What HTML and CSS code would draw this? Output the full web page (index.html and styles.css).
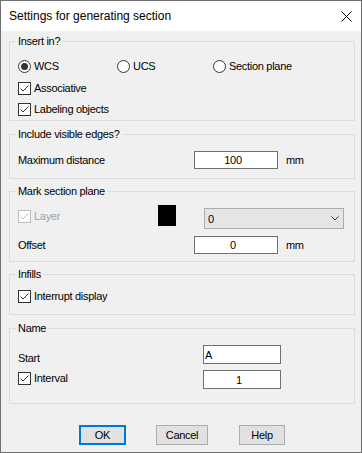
FILE: index.html
```html
<!DOCTYPE html>
<html lang="en">
<head>
  <meta charset="UTF-8" />
  <title>Settings for generating section</title>
  <link rel="stylesheet" href="styles.css">
</head>
<body>
  <div class="dialog">
    <div class="titlebar">
      <span class="title">Settings for generating section</span>
      <svg class="close" width="11" height="11" viewBox="0 0 11 11">
        <path d="M0.5 0.5 L10.5 10.5 M10.5 0.5 L0.5 10.5" stroke="#000" stroke-width="1" fill="none"/>
      </svg>
    </div>

    <div class="content">
      <fieldset class="group g-insert">
        <legend>Insert in?</legend>
        <div class="radio-row">
          <label class="option"><span class="radio on"></span>WCS</label>
          <label class="option"><span class="radio"></span>UCS</label>
          <label class="option"><span class="radio"></span>Section plane</label>
        </div>
        <div class="check-row">
          <label class="option">
            <span class="checkbox"><svg width="11" height="11" viewBox="0 0 11 11"><path d="M1.5 5.5 L4 8 L9.5 2.5" stroke="#333" fill="none"/></svg></span>Associative
          </label>
        </div>
        <div class="check-row">
          <label class="option">
            <span class="checkbox"><svg width="11" height="11" viewBox="0 0 11 11"><path d="M1.5 5.5 L4 8 L9.5 2.5" stroke="#333" fill="none"/></svg></span>Labeling objects
          </label>
        </div>
      </fieldset>

      <fieldset class="group g-edges">
        <legend>Include visible edges?</legend>
        <div class="field-row">
          <span>Maximum distance</span>
          <input class="edit" type="text" value="100">
          <span class="unit">mm</span>
        </div>
      </fieldset>

      <fieldset class="group g-mark">
        <legend>Mark section plane</legend>
        <div class="layer-row">
          <label class="option layer disabled">
            <span class="checkbox"><svg width="11" height="11" viewBox="0 0 11 11"><path d="M1.5 5.5 L4 8 L9.5 2.5" stroke="#bcbcbc" fill="none"/></svg></span>Layer
          </label>
          <span class="swatch"></span>
          <div class="combo">
            <span>0</span>
            <svg width="8" height="5" viewBox="0 0 8 5"><path d="M0.5 0.5 L4 4 L7.5 0.5" stroke="#333" fill="none"/></svg>
          </div>
        </div>
        <div class="field-row offset-row">
          <span>Offset</span>
          <input class="edit" type="text" value="0">
          <span class="unit">mm</span>
        </div>
      </fieldset>

      <fieldset class="group g-infills">
        <legend>Infills</legend>
        <div class="single-row">
          <label class="option">
            <span class="checkbox"><svg width="11" height="11" viewBox="0 0 11 11"><path d="M1.5 5.5 L4 8 L9.5 2.5" stroke="#333" fill="none"/></svg></span>Interrupt display
          </label>
        </div>
      </fieldset>

      <fieldset class="group g-name">
        <legend>Name</legend>
        <div class="name-row">
          <span class="start-label">Start</span>
          <input class="edit edit-left" type="text" value="A">
        </div>
        <div class="name-row interval-row">
          <label class="option interval">
            <span class="checkbox"><svg width="11" height="11" viewBox="0 0 11 11"><path d="M1.5 5.5 L4 8 L9.5 2.5" stroke="#333" fill="none"/></svg></span>Interval
          </label>
          <input class="edit" type="text" value="1">
        </div>
      </fieldset>

      <div class="buttons">
        <button class="btn btn-ok">OK</button>
        <button class="btn btn-cancel">Cancel</button>
        <button class="btn btn-help">Help</button>
      </div>
    </div>
  </div>
</body>
</html>
```

FILE: styles.css
```css
* {
  box-sizing: border-box;
}

body {
  margin: 0;
  font-family: "Liberation Sans", Arial, sans-serif;
  font-size: 11px;
  letter-spacing: -0.3px;
  color: #000;
  background: #fff;
}

.dialog {
  width: 362px;
  height: 453px;
  border: 1px solid #707070;
  background: #f0f0f0;
  display: flex;
  flex-direction: column;
}

.titlebar {
  height: 30px;
  flex: none;
  background: #fff;
  display: flex;
  align-items: center;
  justify-content: space-between;
  padding: 0 9px 0 8px;
}

.title {
  font-size: 12px;
  letter-spacing: 0;
}

.content {
  padding: 4px 6px 0 8px;
}

/* group boxes */
.group {
  margin: 7px 0 0;
  padding: 0 8px;
  border: 1px solid #dcdcdc;
  min-width: 0;
}

.group legend {
  padding: 0 2px;
  margin-left: -2px;
  line-height: 13px;
}

.g-insert {
  margin-top: 0;
  padding-top: 8px;
  padding-bottom: 0;
}

.g-edges {
  padding-top: 10px;
  padding-bottom: 9px;
}

.g-mark {
  margin-top: 6px;
  padding-top: 7px;
  padding-bottom: 7px;
}

.g-infills {
  margin-top: 6px;
  padding-top: 6px;
  padding-bottom: 8px;
}

.g-name {
  padding-top: 10px;
  padding-bottom: 14px;
}

/* options */
.option {
  display: flex;
  align-items: center;
  gap: 3px;
  line-height: 13px;
}

.radio-row {
  display: grid;
  grid-template-columns: 99px 96px auto;
  align-items: center;
  height: 21px;
  margin-bottom: 1px;
}

.check-row {
  display: flex;
  align-items: center;
  height: 21px;
}

.single-row {
  display: flex;
  align-items: center;
  height: 19px;
}

.radio {
  width: 13px;
  height: 13px;
  border: 1px solid #333;
  border-radius: 50%;
  background: #fff;
  display: flex;
  align-items: center;
  justify-content: center;
}

.radio.on::after {
  content: "";
  width: 7px;
  height: 7px;
  border-radius: 50%;
  background: #333;
}

.checkbox {
  width: 13px;
  height: 13px;
  border: 1px solid #333;
  background: #fff;
  display: flex;
}

.disabled {
  color: #a0a0a0;
}

.disabled .checkbox {
  border-color: #bcbcbc;
}

/* text fields */
.field-row {
  display: grid;
  grid-template-columns: 176px 84px auto;
  align-items: center;
  height: 18px;
}

.edit {
  height: 18px;
  width: 100%;
  border: 1px solid #707070;
  background: #fff;
  font: inherit;
  letter-spacing: inherit;
  color: #000;
  text-align: center;
  padding: 0 6px 0 0;
  margin: 0;
  outline: none;
}

.edit-left {
  text-align: left;
  padding: 0 0 0 1px;
}

.unit {
  padding-left: 8px;
}

.layer-row {
  display: flex;
  align-items: flex-start;
  height: 24px;
}

.layer {
  width: 140px;
  margin-top: 5px;
}

.swatch {
  width: 18px;
  height: 21px;
  background: #000;
  margin-right: 28px;
}

.combo {
  width: 140px;
  height: 21px;
  margin-top: 3px;
  border: 1px solid #adadad;
  background: #e5e5e5;
  display: flex;
  align-items: center;
  justify-content: space-between;
  padding: 0 4px 0 3px;
}

.offset-row {
  margin-top: 7px;
}

.name-row {
  display: grid;
  grid-template-columns: 185px 78px;
  align-items: start;
  height: 19px;
}

.name-row .edit {
  height: 19px;
}

.start-label {
  line-height: 13px;
  margin-top: 7px;
}

.interval-row {
  margin-top: 6px;
}

.interval {
  margin-top: 2px;
}

/* buttons */
.buttons {
  display: flex;
  margin-top: 21px;
  padding-left: 70px;
}

.btn {
  height: 20px;
  border: 1px solid #adadad;
  background: #e1e1e1;
  font: inherit;
  letter-spacing: inherit;
  color: #000;
  padding: 0;
  margin: 0;
}

.btn-ok {
  width: 47px;
  border: 2px solid #0078d7;
}

.btn-cancel {
  width: 52px;
  margin-left: 30px;
}

.btn-help {
  width: 46px;
  margin-left: 31px;
}
```
